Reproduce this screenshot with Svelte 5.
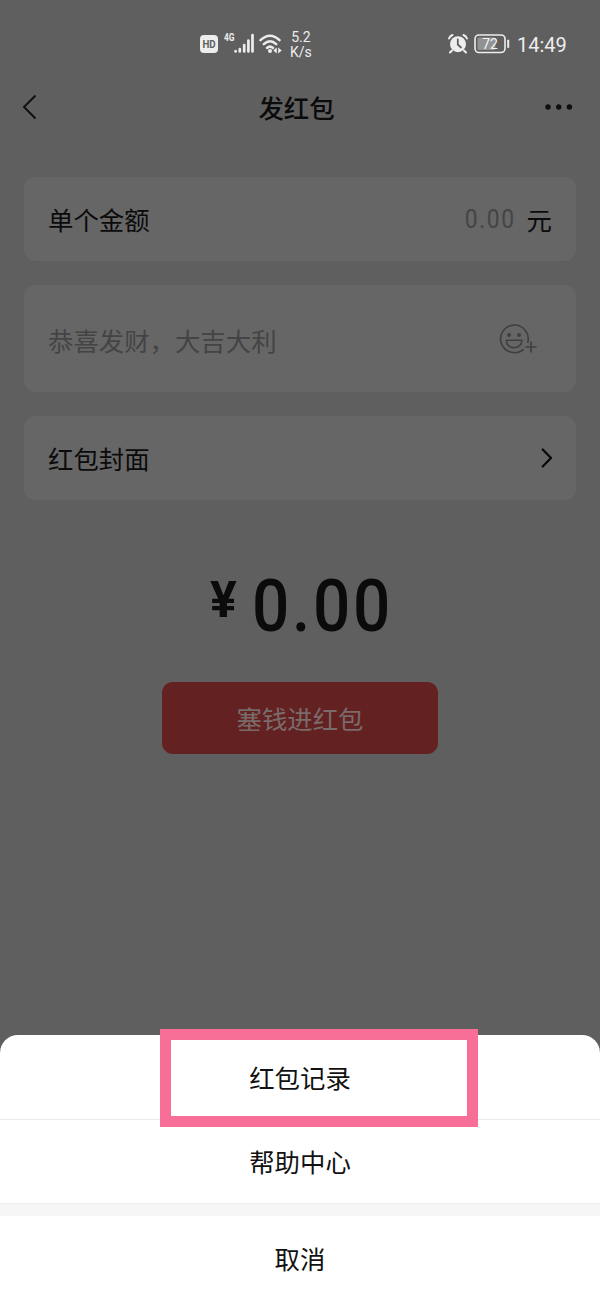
<script>
  let amount = '0.00';

  let actions = ['红包记录', '帮助中心'];
</script>

<div class="screen">
  <div class="status">
    <svg class="hd" width="18" height="18" viewBox="0 0 18 18">
      <rect width="18" height="18" rx="4" fill="#ededed" />
      <text x="2.4" y="13" textLength="13.2" lengthAdjust="spacingAndGlyphs" font-size="11.5" font-weight="700" fill="#5f5f5f">HD</text>
    </svg>
    <svg class="signal" width="31" height="22" viewBox="0 0 31 22">
      <text x="0" y="10" textLength="10.5" lengthAdjust="spacingAndGlyphs" font-size="11" font-weight="700" fill="#ededed">4G</text>
      <g stroke="#ededed" stroke-width="2.7" stroke-linecap="round">
        <path d="M11.6 20.2v.2M15.8 18v2.4M20.2 14v6.4M24.4 9.5v10.9M28.5 4v16.4" />
      </g>
    </svg>
    <svg class="wifi" width="24" height="20" viewBox="0 0 24 20">
      <g fill="none" stroke="#ededed" stroke-width="2.5" stroke-linecap="round">
        <path d="M1.5 6.2Q11 -2.6 20.5 6.2" />
        <path d="M4.8 10.2Q11 4.4 17.2 10.2" />
        <path d="M8 14Q11 11.2 14 14" />
      </g>
      <circle cx="11" cy="17" r="2" fill="#ededed" />
      <path d="M17.8 13.5v6l-3.5-3zM19.2 13.5v6l3.5-3z" fill="#ededed" />
    </svg>
    <div class="speed"><span>5.2</span><span>K/s</span></div>

    <svg class="alarm" width="20" height="20" viewBox="0 0 20 20">
      <circle cx="10" cy="10.2" r="8" fill="#ededed" />
      <path d="M1 4.5Q2 2 4.5 1M19 4.5Q18 2 15.5 1M4 16.5l-2 2M16 16.5l2 2" fill="none" stroke="#ededed" stroke-width="2" stroke-linecap="round" />
      <path d="M9.8 5.5v5l3.2 3" fill="none" stroke="#5f5f5f" stroke-width="1.8" stroke-linecap="round" />
    </svg>
    <svg class="battery" width="36" height="20" viewBox="0 0 36 20">
      <rect x="1" y="1" width="30" height="17.5" rx="4" fill="none" stroke="#ededed" stroke-width="1.6" />
      <rect x="3.5" y="3.5" width="18" height="12.5" rx="1.5" fill="#929292" />
      <text x="16" y="14.7" text-anchor="middle" font-size="14" fill="#f2f2f2">72</text>
      <path d="M34.2 5.8v8" stroke="#ededed" stroke-width="2" />
    </svg>
    <span class="time">14:49</span>
  </div>

  <div class="nav">
    <svg width="16" height="26" viewBox="0 0 16 26">
      <path d="M13.5 1.5L2 13l11.5 11.5" fill="none" stroke="#111" stroke-width="2" />
    </svg>
    <h1>发红包</h1>
    <svg width="28" height="6" viewBox="0 0 28 6" fill="#0e0e0e">
      <circle cx="3" cy="3" r="2.7" />
      <circle cx="13.7" cy="3" r="2.7" />
      <circle cx="24.4" cy="3" r="2.7" />
    </svg>
  </div>

  <div class="form">
    <div class="card">
      <span>单个金额</span>
      <div class="value"><span class="placeholder num">{amount}</span><span>元</span></div>
    </div>

    <div class="card message">
      <span class="placeholder">恭喜发财，大吉大利</span>
      <svg class="emoji" width="40" height="32" viewBox="0 0 40 32" fill="none" stroke="#3f3f3f" stroke-width="1.6">
        <path d="M28.6 19A13.8 13.8 0 1 0 24.7 25.1" />
        <path d="M7.3 16.2h15.6c0 10-15.6 10-15.6 0z" stroke-linejoin="round" />
        <circle cx="10" cy="11" r="2" fill="#3f3f3f" stroke="none" />
        <circle cx="20" cy="11" r="2" fill="#3f3f3f" stroke="none" />
        <path d="M32 17.5v11M26.5 23h11" />
      </svg>
    </div>

    <div class="card">
      <span>红包封面</span>
      <svg class="arrow" width="12" height="20" viewBox="0 0 12 20">
        <path d="M1.7 1.5L10 10l-8.3 8.5" fill="none" stroke="#080808" stroke-width="2.2" stroke-linecap="round" stroke-linejoin="round" />
      </svg>
    </div>
  </div>

  <div class="total">
    <span class="yen">¥</span>
    <span class="sum">{amount}</span>
  </div>

  <button class="pay">塞钱进红包</button>

  <div class="sheet">
    {#each actions as action, i}
      <div class="item">
        {action}
        {#if i === 0}
          <div class="highlight"></div>
        {/if}
      </div>
    {/each}
    <div class="gap"></div>
    <div class="item">取消</div>
  </div>
</div>

<style>
  :global(body) {
    margin: 0;
    background: #5f5f5f;
  }
  .screen {
    width: 600px;
    height: 1300px;
    display: flex;
    flex-direction: column;
    overflow: hidden;
    background: #5f5f5f;
    color: #0b0b0b;
    font-family: Roboto, "Noto Sans CJK SC", sans-serif;
    font-size: 25.4px;
  }
  .status {
    height: 76px;
    padding: 12px 33px 0 200px;
    box-sizing: border-box;
    display: flex;
    align-items: center;
    color: #ededed;
  }
  .signal {
    margin-left: 6px;
    margin-top: -4px;
  }
  .wifi {
    margin-left: 4px;
  }
  .speed {
    margin-left: 7px;
    padding-top: 2px;
    display: flex;
    flex-direction: column;
    align-items: center;
    font-size: 14px;
    line-height: 15px;
  }
  .alarm {
    margin-left: auto;
  }
  .battery {
    margin-left: 6px;
  }
  .time {
    width: 50px;
    margin-left: 7px;
    padding-top: 2px;
    font-size: 20px;
    white-space: nowrap;
  }
  .nav {
    height: 62px;
    padding: 0 27px 0 22px;
    display: flex;
    align-items: center;
    justify-content: space-between;
  }
  h1 {
    margin: 0 0 0 10px;
    font-size: 25.4px;
    font-weight: 500;
  }
  .form {
    padding: 39px 24px 0;
    display: flex;
    flex-direction: column;
    gap: 24px;
  }
  .card {
    height: 84px;
    padding: 0 24px;
    box-sizing: border-box;
    display: flex;
    align-items: center;
    justify-content: space-between;
    border-radius: 11px;
    background: #666;
  }
  .message {
    height: 107px;
    padding-top: 2px;
  }
  .placeholder {
    color: #444;
  }
  .value {
    display: flex;
    align-items: center;
    gap: 11px;
  }
  .num {
    letter-spacing: 1.8px;
    transform: scaleX(0.9);
    transform-origin: right;
  }
  .emoji {
    margin-right: 13px;
  }
  .arrow {
    margin-right: -1px;
  }
  .total {
    height: 84px;
    margin-top: 64px;
    padding-left: 210px;
    display: flex;
    align-items: flex-start;
    font-weight: 500;
  }
  .yen {
    width: 42px;
    font-size: 50px;
    line-height: 72px;
    font-weight: 700;
  }
  .sum {
    font-size: 73px;
    line-height: 84px;
    letter-spacing: 3px;
    transform: scaleX(0.9);
    transform-origin: left;
  }
  .pay {
    width: 276px;
    height: 72px;
    margin: 34px auto 0;
    padding: 0;
    border: 0;
    border-radius: 11px;
    background: #642122;
    color: #7a6b6b;
    font: inherit;
  }
  .sheet {
    margin-top: auto;
    border-radius: 18px 18px 0 0;
    background: #fff;
    color: #111;
  }
  .item {
    position: relative;
    height: 84px;
    display: flex;
    align-items: center;
    justify-content: center;
  }
  .item + .item {
    box-shadow: inset 0 1px #ebebeb;
  }
  .gap {
    height: 13px;
    background: #f6f6f6;
    box-shadow: inset 0 1px #efefef;
  }
  .highlight {
    position: absolute;
    z-index: 1;
    left: 160px;
    top: -6px;
    width: 318px;
    height: 98px;
    box-sizing: border-box;
    border: 11px solid #f76f96;
  }
</style>
